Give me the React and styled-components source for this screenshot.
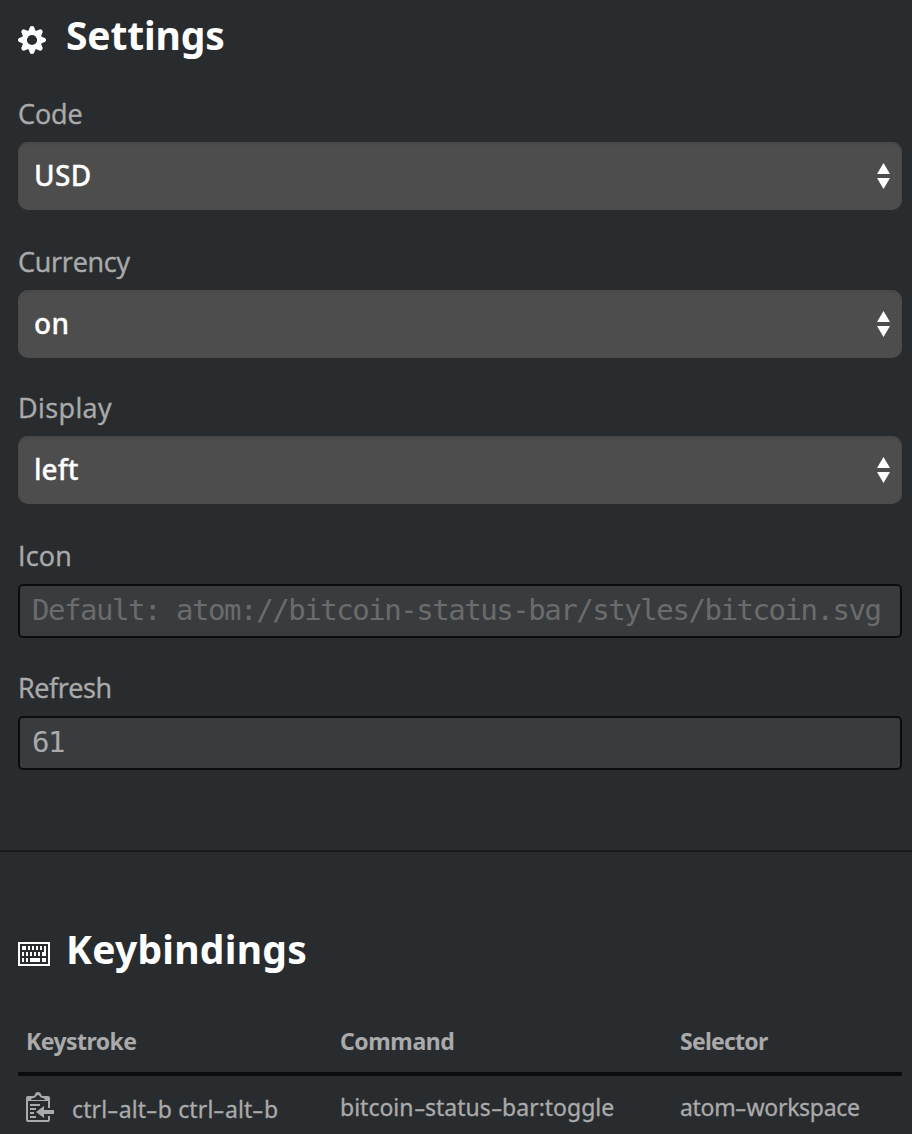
import React from "react";
import styled, { createGlobalStyle } from "styled-components";

const GlobalStyle = createGlobalStyle`
  * { box-sizing: border-box; }
  body {
    margin: 0;
    background: #292c2f;
    color: #aaaaaa;
    font-family: "Noto Sans", "Open Sans", sans-serif;
  }
`;

const Page = styled.main`
  width: 912px;
  height: 1134px;
  overflow: hidden;
  background: #292c2f;
`;

const Section = styled.section`
  padding: 0 10px 0 18px;
`;

const SettingsSection = styled(Section)`
  height: 850px;
`;

const KeySection = styled(Section)`
  border-top: 2px solid #17191b;
  padding-top: 62px;
`;

const Heading = styled.h2`
  display: flex;
  align-items: center;
  gap: ${(p) => p.$gap}px;
  height: 74px;
  margin: 0;
  padding-bottom: 4px;
  color: #fff;
  font-size: 39px;
  font-weight: 700;
  line-height: 70px;
  letter-spacing: ${(p) => p.$spacing}px;

  svg { flex: none; margin-top: 10px; }
`;

const Fields = styled.div`
  padding-top: 25px;
`;

const Field = styled.div`
  height: ${(p) => p.$height}px;
`;

const Label = styled.label`
  display: block;
  height: 43px;
  font-family: "Open Sans", "Noto Sans", sans-serif;
  font-size: 27px;
  line-height: 30px;
  letter-spacing: ${(p) => p.$spacing || 0}px;
  -webkit-text-stroke: 0.4px #aaaaaa;
`;

const Select = styled.div`
  display: flex;
  align-items: center;
  justify-content: space-between;
  height: 68px;
  padding: 0 12px 0 16px;
  border-radius: 10px;
  background: #4d4d4d;
  box-shadow: inset 0 2px 2px #484848;
  color: #fff;
  font-size: 28px;
  font-weight: 500;
  letter-spacing: ${(p) => p.$spacing || 0}px;
  -webkit-text-stroke: 0.3px #fff;
`;

const Value = styled.span`
  height: 68px;
  line-height: 66px;
`;

const Input = styled.div`
  height: 54px;
  padding: 0 12px;
  border: 2px solid #0b0c0e;
  border-radius: 5px;
  background: #393c3f;
  color: ${(p) => (p.$placeholder ? "#6b6b6b" : "#aaaaaa")};
  font-family: "DejaVu Sans Mono", monospace;
  font-size: 29px;
  line-height: 48px;
  letter-spacing: -1.45px;
  white-space: nowrap;
`;

const Table = styled.div`
  display: grid;
  grid-template-columns: 314px 340px 1fr;
  margin-top: 24px;
`;

const HeadCell = styled.div`
  height: 64px;
  padding-left: 8px;
  border-bottom: 4px solid #0b0c0e;
  font-size: 23px;
  font-weight: 700;
  line-height: 58px;
  letter-spacing: ${(p) => p.$spacing || 0}px;
`;

const Cell = styled.div`
  display: flex;
  height: 64px;
  padding-left: 8px;
  font-size: 23px;
  line-height: ${(p) => p.$line || 62}px;
  letter-spacing: ${(p) => p.$spacing || 0}px;
  white-space: pre;
  -webkit-text-stroke: 0.3px #aaaaaa;

  svg { flex: none; margin: 16px 18px 0 0; }
`;

const Dash = styled.span`
  display: inline-block;
  margin: 0 2px;
  transform: scaleX(1.55);
`;

const Dashed = ({ text }) => (
  <span>
    {text.split("-").map((part, i) => (
      <React.Fragment key={i}>
        {i > 0 && <Dash>-</Dash>}
        {part}
      </React.Fragment>
    ))}
  </span>
);

const GearIcon = () => (
  <svg width="28" height="28" viewBox="0 0 28 28">
    <circle cx="14" cy="14" r="7.600" fill="none" stroke="#fff" strokeWidth="5" />
    {[0, 45, 90, 135, 180, 225, 270, 315].map((a) => (
      <path
        key={a}
        d="M10.400 5 11.900 1.200Q12.300 0 14 0T16.100 1.200L17.600 5Z"
        fill="#fff"
        transform={`rotate(${a} 14 14)`}
      />
    ))}
  </svg>
);

const KeyboardIcon = () => (
  <svg width="32" height="24" viewBox="0 0 16 12" shapeRendering="crispEdges">
    <path fill="#fff" fillRule="evenodd" d="M0 0h16v12H0zM1 1v10h14V1z" />
    <path
      fill="#fff"
      d="M2 2h2v2H2zM5 2h1v2H5zM7 2h1v2H7zM9 2h1v2H9zM11 2h1v2h-1zM13 2h1v5h-2V5h1zM2 5h1v2H2zM4 5h1v2H4zM6 5h1v2H6zM8 5h1v2H8zM10 5h1v2h-1zM2 8h1v2H2zM4 8h1v2H4zM6 8h5v2H6zM12 8h2v2h-2z"
    />
  </svg>
);

const PasteIcon = () => (
  <svg width="28" height="30" viewBox="0 0 28 30" fill="#aaa">
    <path d="M2 4h5c1 0 2-.6 2-1.7C9.400.8 10.500 0 12 0s2.600.8 3 2.300C15 3.400 16 4 17 4h5q2 0 2 2v10h-2V9H2v19h20v-4h2v4q0 2-2 2H2q-2 0-2-2V6q0-2 2-2z" />
    <path fill="#292c2f" d="M5 8c0-1.300 1.200-2 2.600-2 2.400 0 2.600-3 4.400-3s2 3 4.400 3C17.800 6 19 6.700 19 8z" />
    <path d="M4 12h10v2H4zM4 16h6v2H4zM4 20h4v2H4zM4 24h6v2H4zM10 20l8-6v4h10v4H18v4z" />
  </svg>
);

const Arrows = () => (
  <svg width="13" height="26" viewBox="0 0 13 26" fill="#fff">
    <path d="M6.500 0 13 11H0zM6.500 26 13 15H0z" />
  </svg>
);

const selects = [
  { label: "Code", value: "USD", height: 148, labelSpacing: -0.1, spacing: 0.3 },
  { label: "Currency", value: "on", height: 146, labelSpacing: -0.25, spacing: 0.4 },
  { label: "Display", value: "left", height: 148, labelSpacing: 0.4, spacing: 0 },
];

export default function App() {
  return (
    <Page>
      <GlobalStyle />
      <SettingsSection>
        <Heading $gap={20} $spacing={-0.15}>
          <GearIcon />
          Settings
        </Heading>
        <Fields>
          {selects.map((s) => (
            <Field key={s.label} $height={s.height}>
              <Label $spacing={s.labelSpacing}>{s.label}</Label>
              <Select $spacing={s.spacing}>
                <Value>{s.value}</Value>
                <Arrows />
              </Select>
            </Field>
          ))}
          <Field $height={132}>
            <Label $spacing={0.2}>Icon</Label>
            <Input $placeholder>Default: atom://bitcoin-status-bar/styles/bitcoin.svg</Input>
          </Field>
          <Field $height={132}>
            <Label $spacing={-0.4}>Refresh</Label>
            <Input>61</Input>
          </Field>
        </Fields>
      </SettingsSection>
      <KeySection>
        <Heading $gap={16} $spacing={0.25}>
          <KeyboardIcon />
          Keybindings
        </Heading>
        <Table>
          <HeadCell $spacing={-0.55}>Keystroke</HeadCell>
          <HeadCell $spacing={-0.4}>Command</HeadCell>
          <HeadCell $spacing={-0.75}>Selector</HeadCell>
          <Cell $line={66} $spacing={0.12}>
            <PasteIcon />
            <Dashed text="ctrl-alt-b ctrl-alt-b" />
          </Cell>
          <Cell>
            <Dashed text="bitcoin-status-bar:toggle" />
          </Cell>
          <Cell $spacing={-0.3}>
            <Dashed text="atom-workspace" />
          </Cell>
        </Table>
      </KeySection>
    </Page>
  );
}
